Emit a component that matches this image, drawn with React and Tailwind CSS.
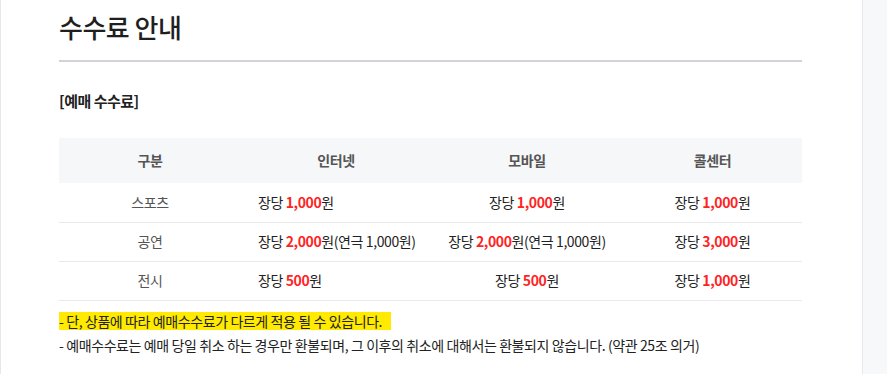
import React from 'react';

const rows = [
  { name: '스포츠', internet: ['1,000', ''], mobile: ['1,000', ''], call: '1,000' },
  { name: '공연', internet: ['2,000', '(연극 1,000원)'], mobile: ['2,000', '(연극 1,000원)'], call: '3,000' },
  { name: '전시', internet: ['500', ''], mobile: ['500', ''], call: '1,000' },
];

function Price({ amount, extra }) {
  return (
    <span>
      장당 <span className="font-bold text-[#ff2424]">{amount}</span>원{extra}
    </span>
  );
}

export default function App() {
  return (
    <div
      className="flex h-[374px] w-[887px] overflow-hidden bg-white text-[#222]"
      style={{ fontFamily: '"Noto Sans CJK KR", "Noto Sans", sans-serif' }}
    >
      <div className="flex-1 border-l border-[#e6e7ec] pl-[58px]">
        <div className="w-[743px]">
          {/* Title */}
          <h1 className="mt-[9px] text-[26px] font-medium leading-[36px] tracking-[-0.5px] text-[#1f1f1f]">수수료 안내</h1>
          <div className="mt-[15px] h-[2px] bg-[#d2d2d8]" />

          <h2 className="mt-[28px] text-[15px] font-bold leading-[22px] tracking-[-0.5px] text-[#222]">[예매 수수료]</h2>

          {/* Fee table */}
          <table className="mt-[26px] w-full table-fixed border-collapse text-[14px] tracking-[-0.4px]">
            <colgroup>
              <col className="w-[182px]" />
              <col className="w-[190px]" />
              <col className="w-[192px]" />
              <col />
            </colgroup>
            <thead>
              <tr className="h-[45px] bg-[#f6f7f9] text-[#555] font-bold">
                <th className="font-bold">구분</th>
                <th className="font-bold">인터넷</th>
                <th className="font-bold">모바일</th>
                <th className="font-bold">콜센터</th>
              </tr>
            </thead>
            <tbody>
              {rows.map((r) => (
                <tr key={r.name} className="h-[39px] border-b border-[#e8e9ec] text-[#222]">
                  <td className="text-center text-[#555]">{r.name}</td>
                  <td className="pl-[17px] text-left">
                    <Price amount={r.internet[0]} extra={r.internet[1]} />
                  </td>
                  <td className="text-center">
                    <Price amount={r.mobile[0]} extra={r.mobile[1]} />
                  </td>
                  <td className="text-center">
                    <Price amount={r.call} extra="" />
                  </td>
                </tr>
              ))}
            </tbody>
          </table>

          {/* Notes */}
          <div className="mt-[11px] text-[14px] leading-[18px] tracking-[-0.4px] text-[#222]">
            <p>
              <span className="inline-block bg-[#ffea00] pr-[9px]">- 단, 상품에 따라 예매수수료가 다르게 적용 될 수 있습니다.</span>
            </p>
            <p className="mt-[6px]">- 예매수수료는 예매 당일 취소 하는 경우만 환불되며, 그 이후의 취소에 대해서는 환불되지 않습니다. (약관 25조 의거)</p>
          </div>
        </div>
      </div>
      <div className="w-[25px] border-l border-[#e8e9ee] bg-[#f7f8fa]" />
    </div>
  );
}
